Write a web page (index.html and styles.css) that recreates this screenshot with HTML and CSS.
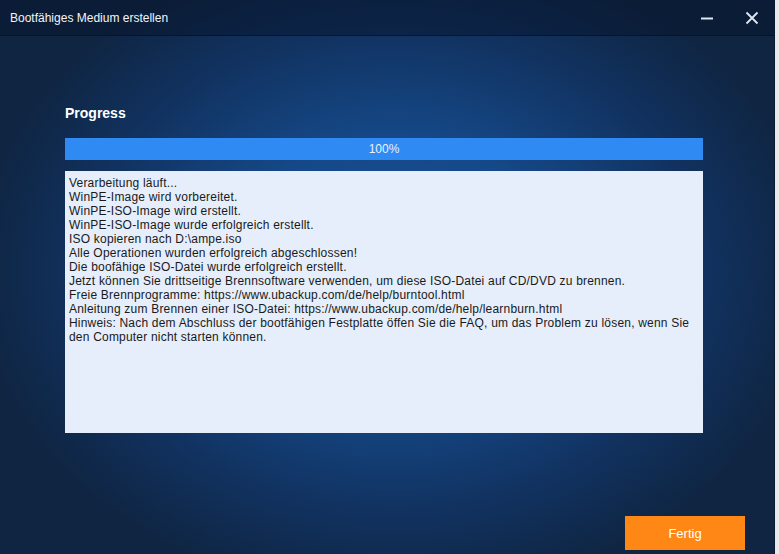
FILE: index.html
```html
<!DOCTYPE html>
<html lang="de">
<head>
  <meta charset="UTF-8">
  <title>Bootfähiges Medium erstellen</title>
  <link rel="stylesheet" href="styles.css">
</head>
<body>
  <div class="window">
    <!-- Title bar -->
    <div class="titlebar">
      <span class="title">Bootfähiges Medium erstellen</span>
      <div class="controls">
        <button class="ctrl" aria-label="Minimieren">
          <svg width="14" height="14" viewBox="0 0 14 14"><path d="M1 7.5h12" stroke="#dfe7f3" stroke-width="2"/></svg>
        </button>
        <button class="ctrl" aria-label="Schließen">
          <svg width="14" height="14" viewBox="0 0 14 14"><path d="M1.5 1.5l11 11M12.5 1.5l-11 11" stroke="#dfe7f3" stroke-width="1.8"/></svg>
        </button>
      </div>
    </div>

    <!-- Main -->
    <div class="main">
      <h2 class="heading">Progress</h2>
      <div class="progress">
        <div class="progress-fill" style="width: 100%"></div>
        <span class="progress-label">100%</span>
      </div>
      <div class="log">
        <p>Verarbeitung läuft...</p>
        <p>WinPE-Image wird vorbereitet.</p>
        <p>WinPE-ISO-Image wird erstellt.</p>
        <p>WinPE-ISO-Image wurde erfolgreich erstellt.</p>
        <p>ISO kopieren nach D:\ampe.iso</p>
        <p>Alle Operationen wurden erfolgreich abgeschlossen!</p>
        <p>Die boofähige ISO-Datei wurde erfolgreich erstellt.</p>
        <p>Jetzt können Sie drittseitige Brennsoftware verwenden, um diese ISO-Datei auf CD/DVD zu brennen.</p>
        <p>Freie Brennprogramme: https://www.ubackup.com/de/help/burntool.html</p>
        <p>Anleitung zum Brennen einer ISO-Datei: https://www.ubackup.com/de/help/learnburn.html</p>
        <p>Hinweis: Nach dem Abschluss der bootfähigen Festplatte öffen Sie die FAQ, um das Problem zu lösen, wenn Sie den Computer nicht starten können.</p>
      </div>
    </div>

    <!-- Footer -->
    <div class="footer">
      <button class="btn-done">Fertig</button>
    </div>
  </div>
</body>
</html>
```

FILE: styles.css
```css
* {
  margin: 0;
  padding: 0;
  box-sizing: border-box;
}

body {
  width: 779px;
  height: 554px;
  overflow: hidden;
  background: #e9e9e9;
  font-family: "Liberation Sans", Arial, sans-serif;
  color: #ffffff;
}

.window {
  width: 775px;
  height: 554px;
  display: flex;
  flex-direction: column;
  background: radial-gradient(ellipse 420px 330px at 395px 270px, #16529c 0%, #154887 40%, #11315e 75%, #0f2542 100%);
  border-right: 1px solid #0b1a30;
}

.titlebar {
  height: 36px;
  display: flex;
  align-items: center;
  justify-content: space-between;
  padding-left: 10px;
  background: rgba(6, 18, 40, 0.45);
  border-bottom: 1px solid rgba(5, 14, 30, 0.6);
}

.title {
  font-size: 12px;
  color: #f2f5fa;
}

.controls {
  display: flex;
  height: 100%;
}

.ctrl {
  width: 45px;
  height: 100%;
  background: none;
  border: none;
  display: flex;
  align-items: center;
  justify-content: center;
  cursor: pointer;
}

.main {
  flex: 1;
  padding: 69px 71px 0 65px;
}

.heading {
  font-size: 14px;
  font-weight: bold;
  line-height: 17px;
  color: #ffffff;
  margin-bottom: 16px;
}

.progress {
  position: relative;
  height: 22px;
  background: #1a4f94;
  margin-bottom: 11px;
}

.progress-fill {
  height: 100%;
  background: #2f8bf3;
}

.progress-label {
  position: absolute;
  inset: 0;
  display: flex;
  align-items: center;
  justify-content: center;
  font-size: 12px;
  color: #eaf2ff;
}

.log {
  height: 262px;
  background: #e5eefa;
  padding: 5px 4px;
  font-size: 12px;
  line-height: 14px;
  letter-spacing: 0.2px;
  color: #1a1a1a;
}

.footer {
  display: flex;
  justify-content: flex-end;
  padding: 0 29px 4px 0;
}

.btn-done {
  width: 120px;
  height: 34px;
  background: #ff8716;
  border: none;
  color: #ffffff;
  font-family: "Liberation Sans", Arial, sans-serif;
  font-size: 13px;
  cursor: pointer;
}
```
